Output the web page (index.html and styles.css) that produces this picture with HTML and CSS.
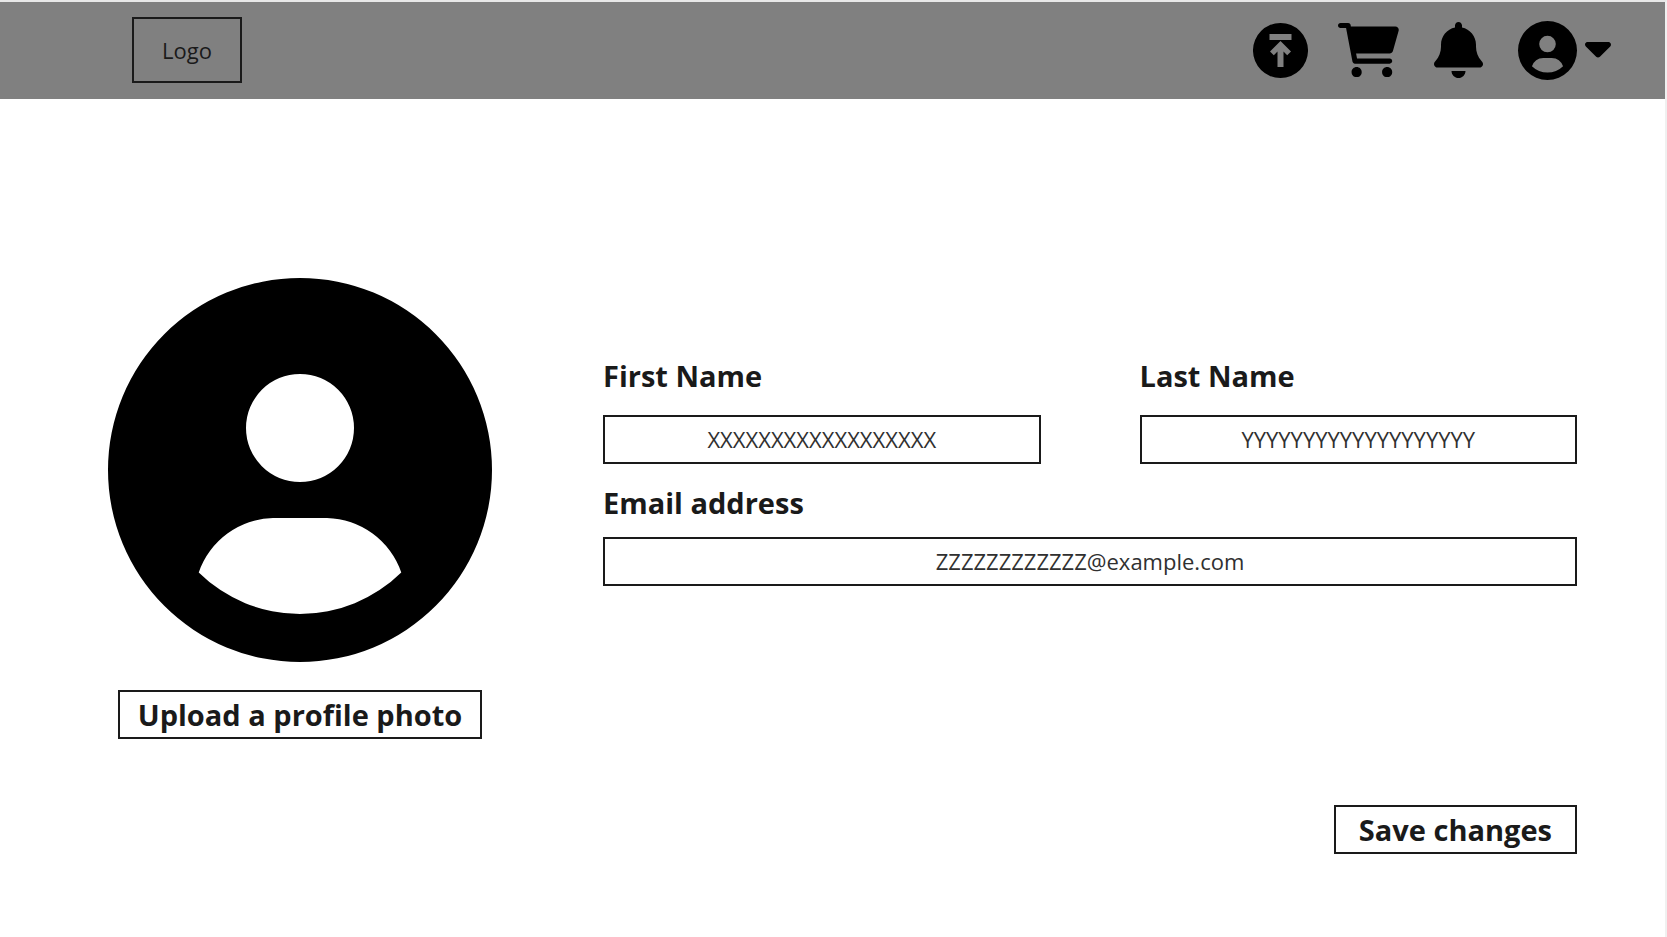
FILE: index.html
```html
<!DOCTYPE html>
<html lang="en">
<head>
<meta charset="utf-8">
<meta name="viewport" content="width=device-width, initial-scale=1">
<title>Profile</title>
<link rel="stylesheet" href="styles.css">
</head>
<body>
<header class="topbar">
  <a class="logo" href="#">Logo</a>
  <nav class="actions" aria-label="Main">
    <button class="icon-button" type="button" aria-label="Upload">
      <svg class="icon-upload" viewBox="0 0 55 55"><path fill-rule="evenodd" d="M27.500 0a27.500 27.500 0 1 0 0 55a27.500 27.500 0 1 0 0-55zM16.500 11h22v6h-22zM27.500 18L38 28.500L34.200 32.300L30.500 28.500V44h-6V28.500L20.800 32.300L17 28.500z"/></svg>
    </button>
    <button class="icon-button" type="button" aria-label="Cart">
      <svg class="icon-cart" viewBox="0 0 576 512"><path d="M96 0C107.500 0 117.400 8.190 119.600 19.510L121.100 32H541.800C562.100 32 578.300 52.250 572.600 72.660L518.600 264.700C514.700 278.500 502.100 288 487.800 288H170.700L179.900 336H488C501.300 336 512 346.700 512 360C512 373.300 501.300 384 488 384H159.100C148.500 384 138.600 375.800 136.400 364.500L76.140 48H24C10.750 48 0 37.250 0 24C0 10.750 10.750 0 24 0H96zM128 464C128 437.500 149.500 416 176 416C202.500 416 224 437.500 224 464C224 490.500 202.500 512 176 512C149.500 512 128 490.500 128 464zM512 464C512 490.500 490.500 512 464 512C437.500 512 416 490.500 416 464C416 437.500 437.500 416 464 416C490.500 416 512 437.500 512 464z"/></svg>
    </button>
    <button class="icon-button" type="button" aria-label="Notifications">
      <svg class="icon-bell" viewBox="0 0 448 512"><path d="M256 32V51.200C329 66.030 384 130.600 384 208V226.800C384 273.900 401.300 319.200 432.500 354.400L439.900 362.700C448.300 372.200 450.400 385.600 445.200 397.100C440 408.600 428.600 416 416 416H32C19.400 416 7.971 408.600 2.809 397.100C-2.353 385.600-.288 372.200 8.084 362.700L15.500 354.400C46.740 319.200 64 273.900 64 226.800V208C64 130.600 118.100 66.030 192 51.200V32C192 14.330 206.300 0 224 0C241.700 0 256 14.330 256 32zM224 512C207 512 190.700 505.300 178.700 493.300C166.700 481.300 160 464.100 160 448H288C288 464.100 281.300 481.300 269.300 493.300C257.300 505.300 241 512 224 512z"/></svg>
    </button>
    <button class="icon-button account" type="button" aria-label="Account menu">
      <svg class="icon-user" viewBox="0 0 512 512"><path fill-rule="evenodd" d="M256 0a256 256 0 1 0 0 512a256 256 0 1 0 0-512zM256 128a72 72 0 1 1 0 144a72 72 0 1 1 0-144zM121 392.500A108 108 0 0 1 220 320H292A108 108 0 0 1 391 392.500A192 192 0 0 1 121 392.500z"/></svg>
      <svg class="icon-caret" viewBox="0 192 320 192"><path d="M310.600 246.600l-127.100 128C176.400 380.900 168.200 384 160 384s-16.380-3.125-22.630-9.375l-127.100-128C.224 237.500-2.516 223.700 2.438 211.800S19.070 192 32 192h255.100c12.940 0 24.620 7.781 29.580 19.750S319.800 237.500 310.600 246.600z"/></svg>
    </button>
  </nav>
</header>
<main class="profile">
  <section class="photo">
    <svg class="avatar" viewBox="0 0 512 512" role="img" aria-label="Profile photo"><path fill-rule="evenodd" d="M256 0a256 256 0 1 0 0 512a256 256 0 1 0 0-512zM256 128a72 72 0 1 1 0 144a72 72 0 1 1 0-144zM121 392.500A108 108 0 0 1 220 320H292A108 108 0 0 1 391 392.500A192 192 0 0 1 121 392.500z"/></svg>
    <button class="button" type="button">Upload a profile photo</button>
  </section>
  <form class="details">
    <div class="names">
      <div class="field field-name">
        <label class="label" for="first-name">First Name</label>
        <input class="input" id="first-name" type="text" value="XXXXXXXXXXXXXXXXXX">
      </div>
      <div class="field field-name">
        <label class="label" for="last-name">Last Name</label>
        <input class="input" id="last-name" type="text" value="YYYYYYYYYYYYYYYYYYY">
      </div>
    </div>
    <div class="field">
      <label class="label" for="email">Email address</label>
      <input class="input" id="email" type="email" value="ZZZZZZZZZZZZ@example.com">
    </div>
    <button class="button button-save" type="submit">Save changes</button>
  </form>
</main>
</body>
</html>
```
FILE: styles.css
```css
*,
*::before,
*::after {
  box-sizing: border-box;
}

body {
  margin: 0;
  min-height: 100vh;
  border-top: 2px solid #e8e8e8;
  border-right: 2px solid #f0f0f0;
  background: #fff;
  color: #1a1a1a;
  font-family: "Open Sans", "Noto Sans", sans-serif;
}

.topbar {
  display: flex;
  align-items: center;
  justify-content: space-between;
  padding: 15px 54px 16px 132px;
  background: #808080;
}

.logo {
  padding: 16px 28px;
  border: 2px solid #1a1a1a;
  color: inherit;
  font-size: 22px;
  line-height: 30px;
  text-decoration: none;
}

.actions {
  display: flex;
  align-items: center;
  gap: 30px;
}

.icon-button {
  display: flex;
  align-items: center;
  padding: 0;
  border: 0;
  background: none;
  cursor: pointer;
}

.icon-button svg,
.avatar {
  display: block;
  fill: #000;
}

.icon-upload {
  width: 55px;
}

.icon-cart {
  width: 61px;
}

.icon-bell {
  width: 49px;
  margin: 0 5px;
}

.account {
  gap: 8px;
}

.icon-user {
  width: 59px;
}

.icon-caret {
  width: 26px;
}

.profile {
  display: flex;
  align-items: flex-start;
  gap: 111px;
  padding: 179px 88px 64px 108px;
}

.photo {
  display: flex;
  flex: 0 1 384px;
  flex-direction: column;
  align-items: center;
  gap: 28px;
}

.avatar {
  width: 100%;
}

.details {
  display: flex;
  flex: 1;
  flex-direction: column;
  gap: 19px;
  padding-top: 78px;
}

.names {
  display: grid;
  grid-template-columns: 1fr 1fr;
  gap: 99px;
}

.field {
  display: flex;
  flex-direction: column;
  gap: 14px;
}

.field-name {
  gap: 19px;
}

.label {
  font-size: 29px;
  font-weight: 700;
  line-height: 40px;
}

.input {
  width: 100%;
  height: 49px;
  padding: 0 16px 2px;
  border: 2px solid #1a1a1a;
  border-radius: 0;
  background: #fff;
  color: #303030;
  font: 400 22px "Open Sans", "Noto Sans", sans-serif;
  text-align: center;
}

.button {
  height: 49px;
  padding: 0 18px;
  border: 2px solid #1a1a1a;
  border-radius: 0;
  background: #fff;
  color: inherit;
  font: 700 29px "Open Sans", "Noto Sans", sans-serif;
  white-space: nowrap;
  cursor: pointer;
}

.button-save {
  align-self: flex-end;
  margin-top: 200px;
  padding: 0 23px;
}
```
